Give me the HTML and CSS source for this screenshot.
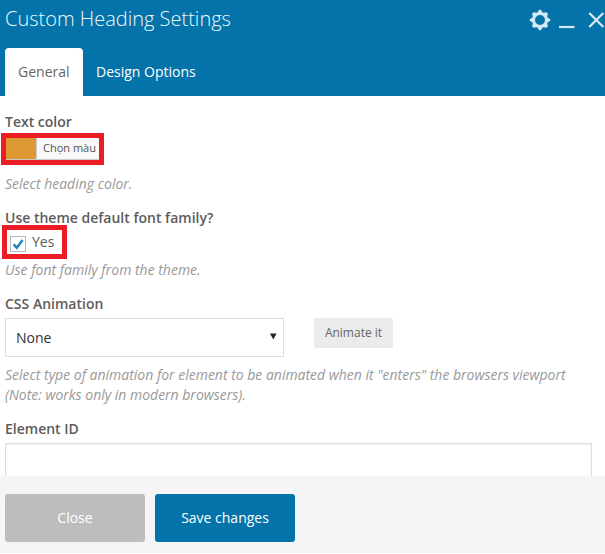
FILE: index.html
```html
<!DOCTYPE html>
<html lang="en">
<head>
<meta charset="utf-8">
<title>Custom Heading Settings</title>
<link rel="stylesheet" href="styles.css">
</head>
<body>
<div class="panel">
  <header class="header">
    <div class="titlebar">
      <h1 class="title">Custom Heading Settings</h1>
      <div class="controls">
        <svg class="gear" width="22" height="22" viewBox="-11 -11 22 22" fill="#d3e9f4">
          <path fill-rule="evenodd" d="M-.8-10.3H.8L2.8-7.2L6.4-7.8L7.8-6.4L7.2-2.8L10.3-.8V.8L7.2 2.8L7.8 6.4L6.4 7.8L2.8 7.2L.8 10.3H-.8L-2.8 7.2L-6.4 7.8L-7.8 6.4L-7.2 2.8L-10.3 .8V-.8L-7.2-2.8L-7.8-6.4L-6.4-7.8L-2.8-7.2ZM0-5A5 5 0 1 0 0 5A5 5 0 1 0 0-5Z"/>
        </svg>
        <svg class="minimize" width="16" height="22" viewBox="0 0 16 22"><path d="M0 18H15.5" stroke="#d3e9f4" stroke-width="2.2"/></svg>
        <svg class="close-icon" width="17" height="22" viewBox="0 0 17 22"><path d="M1.3 4L15.3 18M15.3 4L1.3 18" stroke="#d3e9f4" stroke-width="2.3"/></svg>
      </div>
    </div>
    <nav class="tabs">
      <a class="tab tab-active">General</a>
      <a class="tab">Design Options</a>
    </nav>
  </header>
  <main class="content">
    <section class="field field-color">
      <div class="label">Text color</div>
      <div class="highlight highlight-color">
        <div class="picker"><span class="swatch"></span><span class="picker-text">Chọn màu</span></div>
      </div>
      <p class="hint">Select heading color.</p>
    </section>
    <section class="field field-font">
      <div class="label">Use theme default font family?</div>
      <div class="highlight highlight-check">
        <span class="checkbox"><svg width="14" height="14" viewBox="0 0 14 14"><path d="M2.6 7.3L5.8 10.7L11.6 3" fill="none" stroke="#2486bb" stroke-width="2.5"/></svg></span>
        <span class="check-text">Yes</span>
      </div>
      <p class="hint">Use font family from the theme.</p>
    </section>
    <section class="field field-animation">
      <div class="label">CSS Animation</div>
      <div class="row">
        <div class="select"><span>None</span><svg width="7" height="7" viewBox="0 0 7 7"><path d="M0 .5H6.6L3.3 6.5Z" fill="#222"/></svg></div>
        <div class="animate">Animate it</div>
      </div>
      <p class="hint hint-long">Select type of animation for element to be animated when it "enters" the browsers viewport<br>(Note: works only in modern browsers).</p>
    </section>
    <section class="field">
      <div class="label">Element ID</div>
      <div class="input"></div>
    </section>
  </main>
  <footer class="footer">
    <div class="button">Close</div>
    <div class="button button-primary">Save changes</div>
  </footer>
</div>
</body>
</html>
```
FILE: styles.css
```css
* { box-sizing: border-box; }
body { margin: 0; background: #fff; font: 14px/20px "Open Sans", sans-serif; color: #5c5c5c; }
.panel { width: 605px; height: 554px; display: flex; flex-direction: column; overflow: hidden; }
.header { flex: none; height: 96px; background: #0473aa; display: flex; flex-direction: column; justify-content: space-between; }
.titlebar { display: flex; justify-content: space-between; height: 40px; padding-left: 5px; }
.title { margin: 0; font-size: 20px; font-weight: 300; line-height: 38px; color: #f0f9fd; white-space: nowrap; }
.controls { display: flex; padding-top: 9px; }
.minimize { margin-left: 8px; }
.close-icon { margin-left: 13px; }
.tabs { display: flex; padding-left: 5px; }
.tab { height: 48px; padding: 0 13px; line-height: 48px; color: #fff; white-space: nowrap; }
.tab-active { width: 78px; background: #fff; color: #666; border-radius: 4px 4px 0 0; }
.content { flex: none; height: 380px; padding: 16px 13px 0 5px; overflow: hidden; }
.label { font-weight: 600; height: 20px; white-space: nowrap; }
.field-color { height: 96px; }
.field-font { height: 86px; }
.field-animation { height: 125px; }
.hint { margin: 0; font-style: italic; line-height: 20px; color: #999; white-space: nowrap; }
.hint-long { letter-spacing: -0.01px; }
.highlight { display: flex; border: 5px solid #ec1c24; }
.highlight-color { width: 103px; height: 32px; margin: 1px 0 9px -4px; }
.picker { display: flex; width: 93px; height: 22px; background: #f7f7f7; border-bottom: 1px solid #ccc; }
.swatch { width: 31px; background: #dd9933; border-right: 1px solid #ccc; }
.picker-text { padding-left: 6px; font-size: 11px; line-height: 20px; color: #555; white-space: nowrap; }
.highlight-check { width: 65px; height: 34px; margin: -3px 0 1px -3px; padding: 0 0 0 3px; }
.checkbox { width: 16px; height: 16px; margin-top: 6px; border: 1px solid #b4b9be; background: #fff; }
.checkbox svg { display: block; }
.check-text { margin-left: 6px; line-height: 24px; }
.row { display: flex; gap: 30px; margin: 4px 0 8px; height: 39px; }
.select { display: flex; align-items: center; justify-content: space-between; width: 279px; height: 39px; padding: 0 6px 0 10px; border: 1px solid #ddd; color: #333; }
.select svg { margin-bottom: 2px; }
.animate { width: 79px; height: 30px; border-radius: 2px; background: #ebebeb; color: #666; font-size: 12px; line-height: 29px; text-align: center; white-space: nowrap; }
.input { height: 48px; margin-top: 4px; border: 1px solid #ddd; box-shadow: inset 0 1px 2px rgba(0, 0, 0, .07); }
.footer { flex: 1; display: flex; gap: 10px; padding: 18px 5px 0; background: #f5f5f5; border-bottom: 1px solid #fff; }
.button { width: 140px; height: 48px; border-radius: 3px; background: #bdbdbd; color: #fff; line-height: 48px; text-align: center; }
.button-primary { background: #0473aa; }
```
